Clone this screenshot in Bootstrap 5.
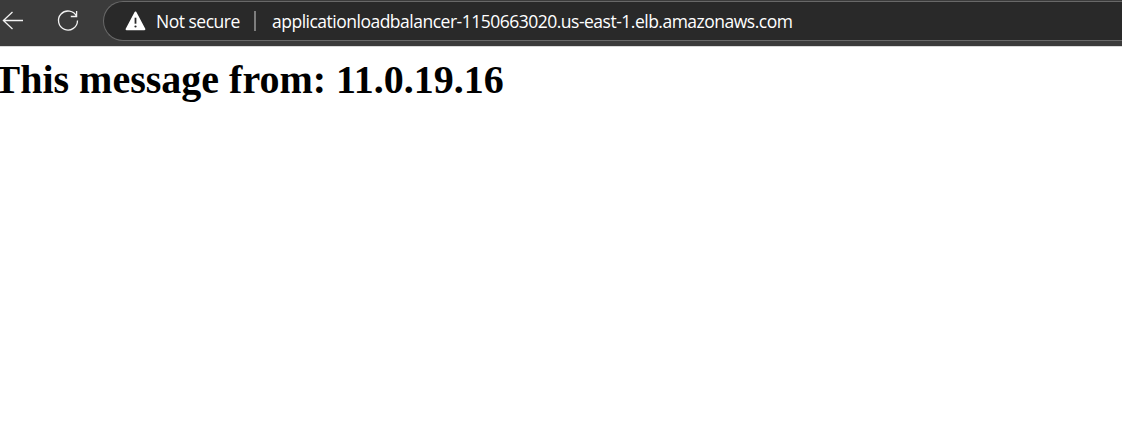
<!DOCTYPE html>
<html lang="en">
<head>
<meta charset="utf-8">
<title>Application load balancer</title>
<link href="https://cdn.jsdelivr.net/npm/bootstrap@5.3.0/dist/css/bootstrap.min.css" rel="stylesheet">
<style>
body{background:#fff;color:#000}
.toolbar{height:46px;background:#3b3b3b;padding-top:1px;box-shadow:0 1px #d9d9d9}
.nav-icons{width:103px;height:40px}
.nav-icons svg{display:block}
.address{height:40px;background:#292929;border:1px solid #686868;border-right:0;border-radius:20px 0 0 20px;color:#fff;font-family:"Open Sans","Noto Sans",sans-serif;font-size:17.5px;line-height:24px;padding:0 0 1px 21px}
.security{width:84px;margin-left:10px;letter-spacing:-.5px}
.divider{width:2px;height:20px;background:#7d7d7d;margin:0 16px 0 14px}
.url{letter-spacing:-.5px}
.message{font:700 40px/46px "Liberation Serif",serif;margin:11px 0 0 -6.5px}
</style>
</head>
<body class="overflow-hidden">
<header class="toolbar d-flex align-items-start">
  <div class="nav-icons flex-shrink-0">
    <svg width="103" height="40" fill="none" stroke="#f2f2f2" stroke-width="1.3">
      <path d="M12.5 11 3.4 19.5l9.1 8.5M3.4 19.5H23"/>
      <path d="M76.6 15.5a9.5 9.5 0 1 0 .9 4M76.6 10v5.5h-5.8"/>
    </svg>
  </div>
  <div class="address d-flex align-items-center flex-grow-1 text-nowrap">
    <svg class="flex-shrink-0" width="21" height="20" viewBox="0 0 21 20"><path d="M10.5 1.5 19.4 18.2H1.6Z" fill="#fff" stroke="#fff" stroke-width="2" stroke-linejoin="round"/><path d="M10.5 6.7v6" stroke="#292929" stroke-width="1.8"/><circle cx="10.5" cy="15.5" r="1.1" fill="#292929"/></svg>
    <span class="security">Not secure</span>
    <span class="divider"></span>
    <span class="url">applicationloadbalancer-1150663020.us-east-1.elb.amazonaws.com</span>
  </div>
</header>
<main><h1 class="message text-nowrap">This message from: 11.0.19.16</h1></main>
<script src="https://cdn.jsdelivr.net/npm/bootstrap@5.3.0/dist/js/bootstrap.bundle.min.js"></script>
</body>
</html>
